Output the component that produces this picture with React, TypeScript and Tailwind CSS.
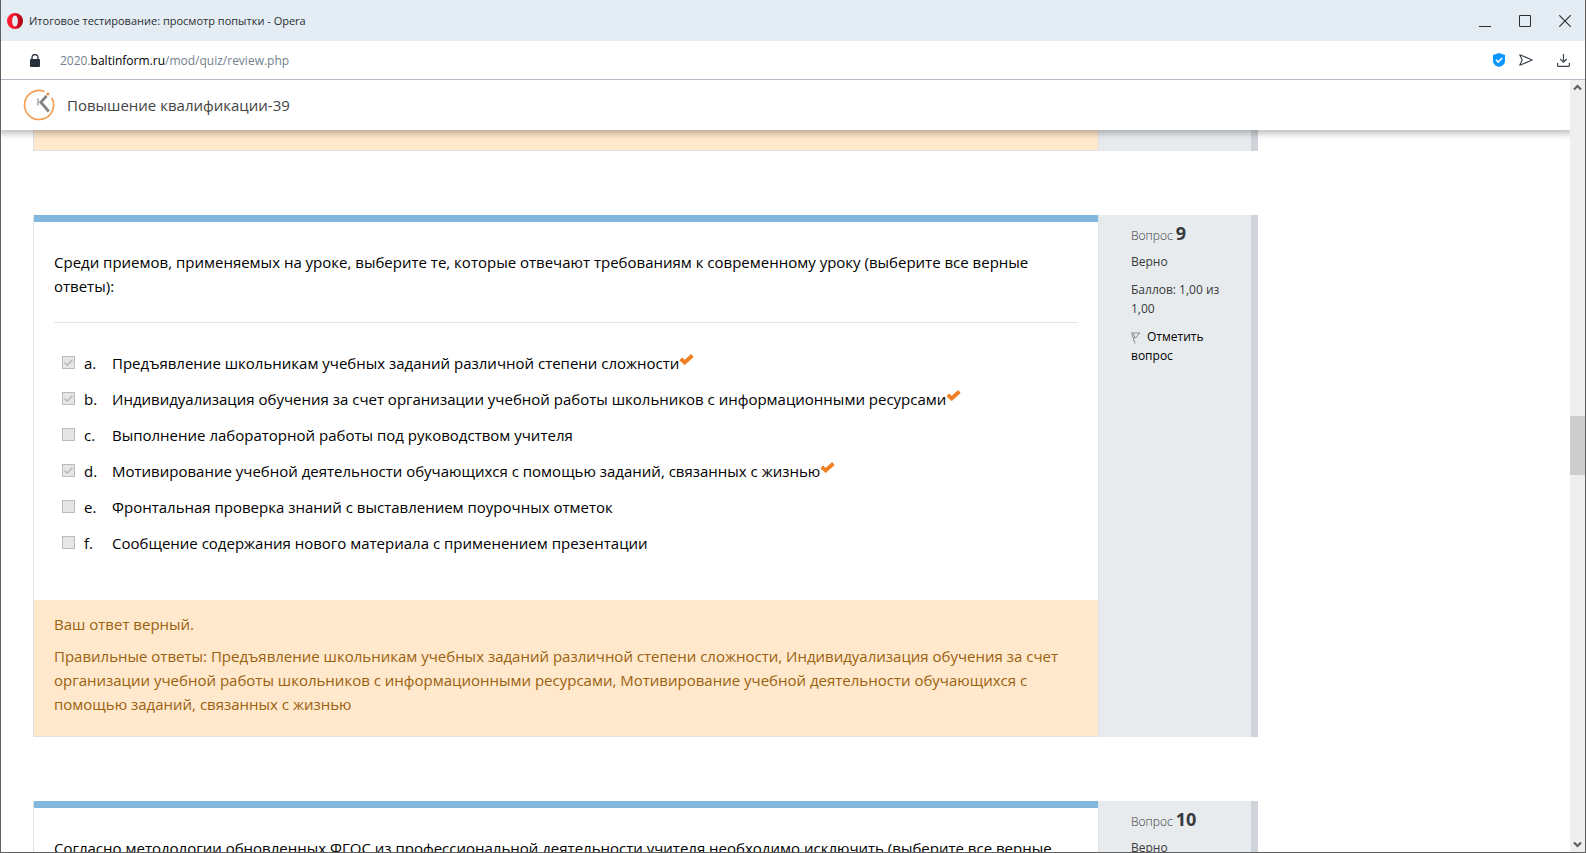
import type { ReactNode } from "react";

type Answer = { letter: string; text: string; checked: boolean };

const answers: Answer[] = [
  { letter: "a.", text: "Предъявление школьникам учебных заданий различной степени сложности", checked: true },
  { letter: "b.", text: "Индивидуализация обучения за счет организации учебной работы школьников с информационными ресурсами", checked: true },
  { letter: "c.", text: "Выполнение лабораторной работы под руководством учителя", checked: false },
  { letter: "d.", text: "Мотивирование учебной деятельности обучающихся с помощью заданий, связанных с жизнью", checked: true },
  { letter: "e.", text: "Фронтальная проверка знаний с выставлением поурочных отметок", checked: false },
  { letter: "f.", text: "Сообщение содержания нового материала с применением презентации", checked: false },
];

function OperaLogo() {
  return (
    <svg width="16" height="16" viewBox="0 0 16 16" aria-hidden="true">
      <defs>
        <linearGradient id="opera" x1="0" x2="1" y1="0" y2="0">
          <stop offset="0.3" stopColor="#ff1b2d" />
          <stop offset="1" stopColor="#a70014" />
        </linearGradient>
      </defs>
      <path
        fill="url(#opera)"
        fillRule="evenodd"
        d="M8 0a8 8 0 1 0 0 16A8 8 0 0 0 8 0Zm0 2.400c1.700 0 2.900 2.400 2.900 5.600S9.700 13.600 8 13.600 5.100 11.200 5.100 8 6.300 2.400 8 2.400Z"
      />
    </svg>
  );
}

function TitleBar() {
  return (
    <header className="flex h-[41px] shrink-0 items-center bg-[#e4ecf4] pl-1.5 pr-3.5">
      <OperaLogo />
      <h1 className="ml-1.5 mt-0.5 text-[11px] text-[#2b2f33]">Итоговое тестирование: просмотр попытки - Opera</h1>
      <div className="ml-auto flex items-center gap-7 text-[#2b2f33]">
        <button aria-label="Свернуть">
          <svg width="12" height="12" viewBox="0 0 12 12" fill="none" stroke="currentColor">
            <path d="M0 11.500h12" />
          </svg>
        </button>
        <button aria-label="Развернуть">
          <svg width="12" height="12" viewBox="0 0 12 12" fill="none" stroke="currentColor">
            <path d="M.5.5h11v11H.5z" />
          </svg>
        </button>
        <button aria-label="Закрыть">
          <svg width="12" height="12" viewBox="0 0 12 12" fill="none" stroke="currentColor" strokeWidth="1.200">
            <path d="M.3.3l11.400 11.400M11.700.3L.3 11.700" />
          </svg>
        </button>
      </div>
    </header>
  );
}

function AddressBar() {
  return (
    <div className="flex h-[39px] shrink-0 items-center border-b border-[#b0bac5] bg-white pl-[29px] pr-[15px]">
      <svg width="10" height="13" viewBox="0 0 10 13" aria-hidden="true">
        <rect y="5" width="10" height="8" rx="1" fill="#25303b" />
        <path d="M2 5.500V3.500a3 3 0 0 1 6 0v2" fill="none" stroke="#25303b" strokeWidth="1.300" />
      </svg>
      <p className="ml-5 mt-px text-[12px] text-[#717f8e]">
        2020.<span className="text-black">baltinform.ru</span>/mod/quiz/review.php
      </p>
      <div className="ml-auto flex items-center text-[#3c4650]">
        <button aria-label="Защита" className="mr-3.5">
          <svg width="12" height="14" viewBox="0 0 12 14">
            <path d="M6 0l6 2v6c0 3-2.500 5-6 6-3.500-1-6-3-6-6V2z" fill="#0a96ff" />
            <path d="M3 6.800l2.200 2.200L9.200 5" fill="none" stroke="#fff" strokeWidth="1.600" />
          </svg>
        </button>
        <button aria-label="Отправить" className="mr-6">
          <svg width="14" height="12" viewBox="0 0 14 12" fill="none" stroke="currentColor" strokeWidth="1.200" strokeLinejoin="round">
            <path d="M.8.7L13.200 6 .8 11.300 3.200 6z" />
          </svg>
        </button>
        <button aria-label="Загрузки">
          <svg width="13" height="13" viewBox="0 0 13 13" fill="none" stroke="currentColor" strokeWidth="1.200">
            <path d="M6.500 0v8M3.300 5L6.500 8.200 9.700 5M.6 9v2.400q0 1 1 1h9.800q1 0 1-1V9" />
          </svg>
        </button>
      </div>
    </div>
  );
}

function SiteLogo() {
  return (
    <svg width="32" height="32" viewBox="0 0 32 32" fill="none" aria-hidden="true">
      <path d="M21.500 2.500A14.500 14.500 0 1 0 28.800 9" stroke="#f5a055" strokeWidth="1.700" />
      <path d="M24 6L25.800 4" stroke="#f08030" strokeWidth="2.400" />
      <path d="M15 9.500v7" stroke="#b4b4b4" strokeWidth="1.800" />
      <path d="M23.600 7L17.800 13.200l8 9.300" stroke="#858585" strokeWidth="2.800" />
    </svg>
  );
}

function SiteHeader() {
  return (
    <div className="relative flex h-[50px] shrink-0 items-center bg-white pl-[22px] shadow-[0_2px_6px_2px_rgba(0,0,0,0.24)]">
      <SiteLogo />
      <a href="#course" className="ml-3 text-[15px] text-[#444]">Повышение квалификации-39</a>
    </div>
  );
}

function CorrectMark() {
  return (
    <svg className="mb-1 inline-block align-baseline" width="15" height="11" viewBox="0 0 15 11" role="img" aria-label="Верно">
      <path d="M1.700 4.800L5.700 8.500 13.400 1.500" fill="none" stroke="#ef7f22" strokeWidth="3.800" />
    </svg>
  );
}

function Scrollbar() {
  return (
    <div className="flex w-[15px] shrink-0 flex-col items-center bg-[#efefef] text-[#606060]" aria-hidden="true">
      <svg className="mt-1" width="9" height="7" viewBox="0 0 9 7" fill="none" stroke="currentColor" strokeWidth="2.200">
        <path d="M1 5.500L4.500 2 8 5.500" />
      </svg>
      <div className="grow-[47]" />
      <div className="h-[59px] w-full bg-[#cdcdcd]" />
      <div className="grow-[53]" />
      <svg className="mb-1" width="9" height="7" viewBox="0 0 9 7" fill="none" stroke="currentColor" strokeWidth="2.200">
        <path d="M1 1.500L4.500 5 8 1.500" />
      </svg>
    </div>
  );
}

function QuestionCard({ info, children }: { info?: ReactNode; children: ReactNode }) {
  return (
    <section className="flex w-full max-w-[1225px] shrink-0">
      <div className="min-w-0 flex-1 border border-t-0 border-[#dee2e6]">{children}</div>
      <aside className="w-[159px] shrink-0 border-r-[7px] border-[#ced4da] bg-[#e8ebee] pl-8 pr-5">{info}</aside>
    </section>
  );
}

function QuestionInfo({ number }: { number: number }) {
  return (
    <div className="flex flex-col gap-[9px] pt-2 text-[12px] leading-[19px] text-[#373a3c]">
      <h2 className="h-5 font-light leading-5">
        Вопрос <span className="text-[18px] font-bold">{number}</span>
      </h2>
      <p>Верно</p>
      <p>Баллов: 1,00 из 1,00</p>
      <a href="#flag" className="text-black">
        <svg className="mr-1.5 inline-block" width="10" height="12" viewBox="0 0 10 12" fill="none" stroke="#8a8a8a" aria-hidden="true">
          <path d="M.6.800L4 11.500M.6 1h8.400L6.300 3.600 5.400 5.500 2.400 6M2.400 2.200L4 5.500" />
        </svg>
        Отметить вопрос
      </a>
    </div>
  );
}

function AnswerRow({ answer }: { answer: Answer }) {
  const id = `answer-${answer.letter[0]}`;
  return (
    <div className="flex items-start">
      <span className="relative mt-[5px] flex">
        <input
          id={id}
          type="checkbox"
          disabled
          defaultChecked={answer.checked}
          className="size-[13px] appearance-none border border-[#bcbcbc] bg-[#e6e6e6]"
        />
        {answer.checked && (
          <svg className="absolute inset-0" width="13" height="13" viewBox="0 0 13 13" fill="none" stroke="#b8b8b8" strokeWidth="1.500" aria-hidden="true">
            <path d="M2.500 6.500l2.700 2.700 5.300-5.500" />
          </svg>
        )}
      </span>
      <label htmlFor={id} className="ml-[9px] flex">
        <span className="w-7 shrink-0">{answer.letter}</span>
        <span>
          {answer.text}
          {answer.checked && <CorrectMark />}
        </span>
      </label>
    </div>
  );
}

export default function App() {
  return (
    <div className="flex h-screen flex-col overflow-hidden border-x border-b border-[#606060] bg-white font-['Open_Sans','Noto_Sans',sans-serif]">
      <TitleBar />
      <AddressBar />
      <div className="flex min-h-0 flex-1">
        <div className="flex min-w-0 flex-1 flex-col overflow-hidden">
          <SiteHeader />
          <main className="flex min-h-0 flex-1 flex-col gap-16 overflow-hidden pl-8 pr-6 text-[15px] leading-6 text-black">
            <QuestionCard>
              <div className="h-5 bg-[#ffe8cc]" />
            </QuestionCard>

            <QuestionCard info={<QuestionInfo number={9} />}>
              <div className="border-t-[7px] border-[#81b6dd] px-5 pb-[45px] pt-7">
                <p>
                  Среди приемов, применяемых на уроке, выберите те, которые отвечают требованиям к современному уроку (выберите все верные ответы):
                </p>
                <hr className="my-6 border-[#e5e5e5]" />
                <div className="flex flex-col gap-3 pl-2 pt-1">
                  {answers.map((answer) => (
                    <AnswerRow key={answer.letter} answer={answer} />
                  ))}
                </div>
              </div>
              <div className="flex flex-col gap-2 bg-[#ffe8cc] px-5 pb-5 pt-3 text-[#9a620f]">
                <p>Ваш ответ верный.</p>
                <p>
                  Правильные ответы: Предъявление школьникам учебных заданий различной степени сложности, Индивидуализация обучения за счет организации учебной работы школьников с информационными ресурсами, Мотивирование учебной деятельности обучающихся с помощью заданий, связанных с жизнью
                </p>
              </div>
            </QuestionCard>

            <QuestionCard info={<QuestionInfo number={10} />}>
              <div className="border-t-[7px] border-[#81b6dd] px-5 pb-12 pt-7">
                <p>
                  Согласно методологии обновленных ФГОС из профессиональной деятельности учителя необходимо исключить (выберите все верные
                </p>
              </div>
            </QuestionCard>
          </main>
        </div>
        <Scrollbar />
      </div>
    </div>
  );
}
